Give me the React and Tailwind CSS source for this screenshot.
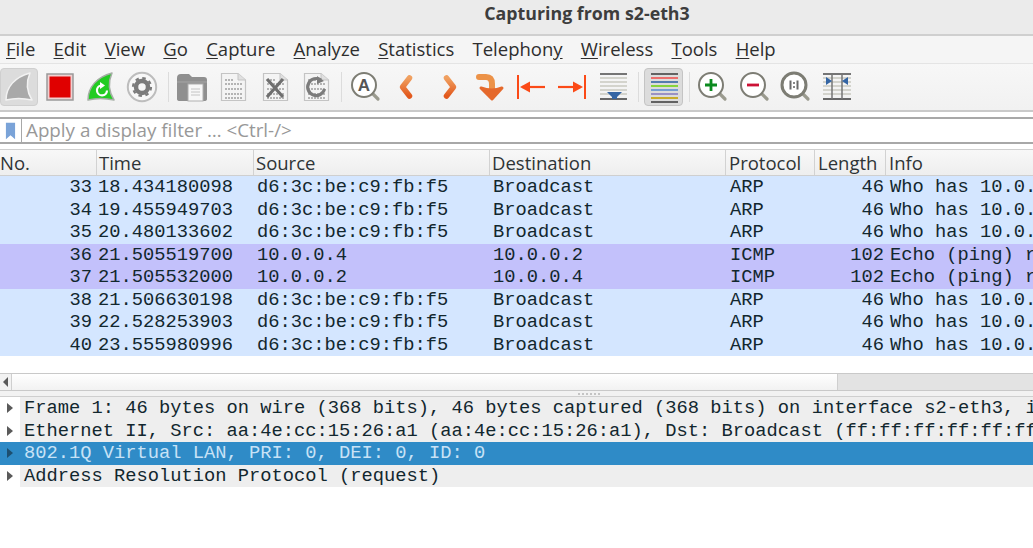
const UI = '"Open Sans", "Noto Sans", sans-serif';

const Fin = ({ fill, stroke }) => (
  <path d="M3 29 C3 16 12 6 27 2 C23 11 24 21 29 29 C20 27 11 27 3 29 Z" fill={fill} stroke={stroke} strokeWidth="1.5" strokeLinejoin="round" />
);

const Doc = ({ children }) => (
  <>
    <path d="M4.5 2.5 H21 L28.5 9 V29.5 H4.5 Z" fill="#f4f4f4" stroke="#c4c4c4" strokeWidth="1.2" />
    <path d="M21 2.5 V9 H28.5" fill="#e0e0e0" stroke="#c4c4c4" />
    <path d="M8 9 H17 M8 13 H25 M8 18 H25 M8 23 H25 M8 27 H25" stroke="#b4b4b4" strokeWidth="2" strokeDasharray="2 1" />
    {children}
  </>
);

const Lens = ({ children }) => (
  <>
    <path d="M21 21 L28 28" stroke="#9a9a8e" strokeWidth="3.2" strokeLinecap="round" />
    <circle cx="14" cy="14" r="12" fill="#fff" stroke="#7d7d74" strokeWidth="2" />
    {children}
  </>
);

const Icon = ({ className = '', children }) => (
  <svg viewBox="0 0 32 32" className={`w-8 h-8 shrink-0 ${className}`}>{children}</svg>
);

const Sep = ({ className = '' }) => <div className={`w-px h-[30px] bg-[#dcdcdc] shrink-0 ${className}`} />;

const Toolbar = () => (
  <div className="h-[48px] shrink-0 flex items-center pb-[1px] bg-gradient-to-b from-[#f7f7f7] to-[#f1f1f1] border-b-2 border-[#c9c9c9]">
    <svg className="w-0 h-0 absolute">
      <defs>
        <linearGradient id="orange" x1="0" y1="0" x2="0" y2="1">
          <stop offset="0" stopColor="#f0a060" />
          <stop offset="1" stopColor="#e2581c" />
        </linearGradient>
      </defs>
    </svg>
    <div className="w-[38px] h-[38px] shrink-0 flex items-center justify-center rounded bg-[#dcdcdc] border border-[#cfcfcf]">
      <Icon><Fin fill="#a9a9a9" stroke="#f2f2f2" /></Icon>
    </div>
    <Icon className="ml-[6px]">
      <rect x="3" y="3" width="26" height="26" fill="#f0d0d0" stroke="#9a9a9a" strokeWidth="1.5" />
      <rect x="5.5" y="5.5" width="21" height="21" fill="#e00000" />
    </Icon>
    <Icon className="ml-[9px]">
      <Fin fill="#22cc22" stroke="#a5aea5" />
      <path d="M22 19.5 A5 5 0 1 1 16 14.5" fill="none" stroke="#fff" strokeWidth="2.2" />
      <path d="M15 11 L20 14.5 L15 18 Z" fill="#fff" />
    </Icon>
    <Icon className="ml-[9px]">
      <circle cx="16" cy="16" r="14.2" fill="#f7f7f7" stroke="#bdbdbd" strokeWidth="2" />
      <circle cx="16" cy="16" r="6" fill="none" stroke="#7b7b7b" strokeWidth="4.5" />
      <circle cx="16" cy="16" r="9" fill="none" stroke="#7b7b7b" strokeWidth="2.2" strokeDasharray="3.5 3.57" />
    </Icon>
    <Sep className="ml-[10px]" />
    <Icon className="ml-[7px]">
      <path d="M1 7 Q1 3 5 3 H13 L16 6 H28 Q31 6 31 9 V28 Q31 30 28 30 H4 Q1 30 1 28 Z" fill="#8f8f8f" />
      <path d="M1 11 H31" stroke="#a6a6a6" strokeWidth="1" />
      <rect x="12" y="13" width="15" height="17" fill="#f7f7f7" stroke="#b0b0b0" />
      <path d="M15 18 H24 M15 21 H24 M15 24 H24" stroke="#c4c4c4" />
    </Icon>
    <Icon className="ml-[9px]"><Doc /></Icon>
    <Icon className="ml-[10px]">
      <Doc><path d="M8 8 L24 26 M24 8 L8 26" stroke="#6f6f6f" strokeWidth="3.2" /></Doc>
    </Icon>
    <Icon className="ml-[9px]">
      <Doc><path d="M21 9 A8.5 8.5 0 1 0 24.5 18" fill="none" stroke="#7c7c7c" strokeWidth="3.2" /><path d="M17 5 L24 10 L17 13 Z" fill="#7c7c7c" /></Doc>
    </Icon>
    <Sep className="ml-[9px]" />
    <Icon className="ml-[8px]">
      <Lens><text x="14" y="20" textAnchor="middle" fontSize="17" fontWeight="700" fontFamily="'Liberation Sans', sans-serif" fill="#555">A</text></Lens>
    </Icon>
    <Icon className="ml-[8px]">
      <path d="M19.5 7 L12.5 16 L19.5 25" fill="none" stroke="url(#orange)" strokeWidth="5.5" strokeLinecap="round" strokeLinejoin="round" />
    </Icon>
    <Icon className="ml-[12px]">
      <path d="M12.5 7 L19.5 16 L12.5 25" fill="none" stroke="url(#orange)" strokeWidth="5.5" strokeLinecap="round" strokeLinejoin="round" />
    </Icon>
    <Icon className="ml-[7px]">
      <path d="M6 6 H13 Q19 6 19 13 V19" fill="none" stroke="#ec9248" strokeWidth="6" strokeLinecap="round" />
      <path d="M8 17 L19 28 L29 17 Q19 21 8 17 Z" fill="#e5692c" stroke="#e5692c" strokeWidth="3" strokeLinejoin="round" />
    </Icon>
    <Icon className="ml-[10px]">
      <path d="M3 4 V28" stroke="#fb4a17" strokeWidth="2" />
      <path d="M7 16 H30" stroke="#fb4a17" strokeWidth="2.2" />
      <path d="M5 16 L15 10.5 V21.5 Z" fill="#fb4a17" />
    </Icon>
    <Icon className="ml-[9px]">
      <path d="M29 4 V28" stroke="#fb4a17" strokeWidth="2" />
      <path d="M2 16 H25" stroke="#fb4a17" strokeWidth="2.2" />
      <path d="M27 16 L17 10.5 V21.5 Z" fill="#fb4a17" />
    </Icon>
    <Icon className="ml-[9px]">
      <path d="M3 3 H30" stroke="#555" strokeWidth="1.6" />
      <path d="M3 7 H30 M3 11 H30 M3 15 H30 M3 19 H30 M3 23 H30" stroke="#c9c9c0" strokeWidth="1.4" />
      <path d="M3 28 H30" stroke="#444" strokeWidth="1.6" />
      <path d="M10 21 H25 L20 26 V28 H15 V26 Z" fill="#3465a4" />
    </Icon>
    <Sep className="ml-[9px]" />
    <div className="ml-[5px] w-[39px] h-[38px] shrink-0 flex items-center justify-center rounded bg-[#dcdcdc] border border-[#c4c4c4]">
      <Icon>
        <path d="M3 3 H30" stroke="#444" strokeWidth="1.6" />
        <path d="M3 7 H30" stroke="#ef5350" strokeWidth="1.6" />
        <path d="M3 11 H30" stroke="#3465a4" strokeWidth="1.6" />
        <path d="M3 15 H30" stroke="#73d216" strokeWidth="1.6" />
        <path d="M3 19 H30" stroke="#5c8fd0" strokeWidth="1.6" />
        <path d="M3 23 H30" stroke="#8a7fc0" strokeWidth="1.6" />
        <path d="M3 27 H30" stroke="#c4a000" strokeWidth="1.6" />
        <path d="M3 31 H30" stroke="#444" strokeWidth="1.6" />
      </Icon>
    </div>
    <Sep className="ml-[6px]" />
    <Icon className="ml-[7px]">
      <Lens><path d="M14 8 V20 M8 14 H20" stroke="#0b8a1e" strokeWidth="2.8" /></Lens>
    </Icon>
    <Icon className="ml-[10px]">
      <Lens><path d="M8 14 H20" stroke="#cc1236" strokeWidth="2.8" /></Lens>
    </Icon>
    <Icon className="ml-[9px]">
      <Lens>
        <circle cx="14" cy="14" r="12" fill="none" stroke="#7d7d74" strokeWidth="3" />
        <path d="M10.5 9.5 V18.5 M17.5 9.5 V18.5" stroke="#6a6a6a" strokeWidth="2" />
        <path d="M14 11 V13 M14 15 V17" stroke="#6a6a6a" strokeWidth="1.6" />
      </Lens>
    </Icon>
    <Icon className="ml-[9px]">
      <path d="M2 3 H30" stroke="#555" strokeWidth="1.6" />
      <path d="M2 7 H30 M2 11 H30 M2 15 H30 M2 19 H30 M2 23 H30" stroke="#c9c9c0" strokeWidth="1.4" />
      <path d="M2 28 H30" stroke="#444" strokeWidth="1.6" />
      <path d="M11 3 V28 M21 3 V28" stroke="#777" strokeWidth="1.5" />
      <path d="M5 6 L11 10 L5 14 Z M27 6 L21 10 L27 14 Z" fill="#3465a4" />
    </Icon>
  </div>
);

const menu = [
  ['F', 'ile'], ['E', 'dit'], ['V', 'iew'], ['G', 'o'], ['C', 'apture'], ['A', 'nalyze'],
  ['S', 'tatistics'], ['Telephon', 'y', true], ['W', 'ireless'], ['T', 'ools'], ['H', 'elp'],
];

const packets = [
  ['33', '18.434180098', 'd6:3c:be:c9:fb:f5', 'Broadcast', 'ARP', '46', 'Who has 10.0.'],
  ['34', '19.455949703', 'd6:3c:be:c9:fb:f5', 'Broadcast', 'ARP', '46', 'Who has 10.0.'],
  ['35', '20.480133602', 'd6:3c:be:c9:fb:f5', 'Broadcast', 'ARP', '46', 'Who has 10.0.'],
  ['36', '21.505519700', '10.0.0.4', '10.0.0.2', 'ICMP', '102', 'Echo (ping) r'],
  ['37', '21.505532000', '10.0.0.2', '10.0.0.4', 'ICMP', '102', 'Echo (ping) r'],
  ['38', '21.506630198', 'd6:3c:be:c9:fb:f5', 'Broadcast', 'ARP', '46', 'Who has 10.0.'],
  ['39', '22.528253903', 'd6:3c:be:c9:fb:f5', 'Broadcast', 'ARP', '46', 'Who has 10.0.'],
  ['40', '23.555980996', 'd6:3c:be:c9:fb:f5', 'Broadcast', 'ARP', '46', 'Who has 10.0.'],
];

const details = [
  'Frame 1: 46 bytes on wire (368 bits), 46 bytes captured (368 bits) on interface s2-eth3, i',
  'Ethernet II, Src: aa:4e:cc:15:26:a1 (aa:4e:cc:15:26:a1), Dst: Broadcast (ff:ff:ff:ff:ff:ff',
  '802.1Q Virtual LAN, PRI: 0, DEI: 0, ID: 0',
  'Address Resolution Protocol (request)',
];

const Head = ({ className = '', children }) => (
  <div className={`h-full flex items-center border-r border-[#d2d2d2] shrink-0 ${className}`}>{children}</div>
);

export default function App() {
  return (
    <div className="w-[1033px] h-[548px] overflow-hidden bg-white flex flex-col" style={{ fontFamily: UI }}>
      {/* Title bar */}
      <div className="h-[36px] shrink-0 flex items-center justify-center pl-[141px] pb-[8px] bg-[#ebebeb] border-b-2 border-[#cfcfcf] text-[17.8px] font-bold text-[#3d3d3d]">
        Capturing from s2-eth3
      </div>

      {/* Menu */}
      <div className="h-[28px] shrink-0 flex items-center gap-[18.25px] pl-[6px] pb-[2px] bg-[#f5f5f5] border-b border-[#e4e4e4] text-[18.5px] text-[#2e2e2e]">
        {menu.map(([a, b, late]) => (
          <span key={a + b}>
            {late ? <>{a}<span className="underline underline-offset-2">{b}</span></> : <><span className="underline underline-offset-2">{a}</span>{b}</>}
          </span>
        ))}
      </div>

      <Toolbar />

      {/* Filter */}
      <div className="h-[37px] shrink-0 bg-white pt-[5px]">
        <div className="h-[27px] flex items-center border-y-2 border-[#a8a8a8]">
          <div className="w-[22px] h-full shrink-0 flex items-center justify-center border-r border-[#a8a8a8]">
            <svg viewBox="0 0 12 18" className="w-[11px] h-[18px]"><path d="M1 0 H11 V18 L6 13.5 L1 18 Z" fill="#7aa3d8" /></svg>
          </div>
          <span className="pl-[4px] text-[18.8px] text-[#989898]">Apply a display filter … &lt;Ctrl-/&gt;</span>
        </div>
      </div>

      {/* Packet list */}
      <div className="h-[27px] shrink-0 flex items-center bg-gradient-to-b from-[#f8f8f8] to-[#eeeeee] border-y border-[#cfcfcf] text-[18.5px] text-[#2e3436]">
        <Head className="w-[97px]">No.</Head>
        <Head className="w-[157px] pl-[2px]">Time</Head>
        <Head className="w-[236px] pl-[2px]">Source</Head>
        <Head className="w-[236px] pl-[2px]">Destination</Head>
        <Head className="w-[89px] pl-[3px]">Protocol</Head>
        <Head className="w-[71px] pl-[3px]">Length</Head>
        <div className="pl-[3px]">Info</div>
      </div>
      <div className="h-[197px] shrink-0 font-['Liberation_Mono',monospace] text-[18.75px] text-[#12272e]">
        {packets.map((p) => (
          <div key={p[0]} className={`h-[22.5px] flex items-center whitespace-pre ${p[4] === 'ICMP' ? 'bg-[#c3c1fb]' : 'bg-[#d4e6ff]'}`}>
            <div className="w-[96px] pr-[4px] text-right shrink-0">{p[0]}</div>
            <div className="w-[157px] pl-[2px] shrink-0">{p[1]}</div>
            <div className="w-[237px] pl-[4px] shrink-0">{p[2]}</div>
            <div className="w-[236px] pl-[3px] shrink-0">{p[3]}</div>
            <div className="w-[89px] pl-[4px] shrink-0">{p[4]}</div>
            <div className="w-[71px] pr-[2px] text-right shrink-0">{p[5]}</div>
            <div className="pl-[4px] min-w-0 overflow-hidden">{p[6]}</div>
          </div>
        ))}
      </div>

      {/* Horizontal scrollbar */}
      <div className="h-[18px] shrink-0 flex bg-[#e3e3e3] border-y border-[#c9c9c9]">
        <div className="w-[12px] shrink-0 flex items-center justify-center bg-[#f2f2f2] border-r border-[#cfcfcf]">
          <svg viewBox="0 0 5 10" className="w-[5px] h-[10px]"><path d="M5 0 V10 L0 5 Z" fill="#5a5a5a" /></svg>
        </div>
        <div className="w-[826px] shrink-0 bg-gradient-to-b from-white to-[#f2f2f2] border-r border-[#cfcfcf]" />
      </div>

      {/* Splitter */}
      <div className="h-[6px] shrink-0 flex items-center justify-center gap-[2px] pl-[144px] bg-[#f2f2f2] border-b border-[#cfcfcf]">
        {[0, 1, 2, 3, 4, 5].map((n) => <div key={n} className="w-[2px] h-[2px] bg-[#c4c4c4]" />)}
      </div>

      {/* Packet details */}
      <div className="font-['Liberation_Mono',monospace] text-[18.75px] text-[#12272e]">
        {details.map((d, i) => (
          <div key={d} className={`h-[22.5px] flex items-center whitespace-pre overflow-hidden ${i === 2 ? 'bg-[#2f8bc7]' : ''}`}>
            <div className="w-[20px] shrink-0 flex items-center justify-center">
              <svg viewBox="0 0 6 10" className="w-[6px] h-[10px]"><path d="M0 0 V10 L6 5 Z" fill={i === 2 ? '#1d4f70' : '#5a5a5a'} /></svg>
            </div>
            <div className={`flex-1 h-full flex items-center pl-[4px] ${i === 2 ? 'text-[#c8e2f6]' : 'bg-[#eeeeee]'}`}>{d}</div>
          </div>
        ))}
      </div>
    </div>
  );
}
